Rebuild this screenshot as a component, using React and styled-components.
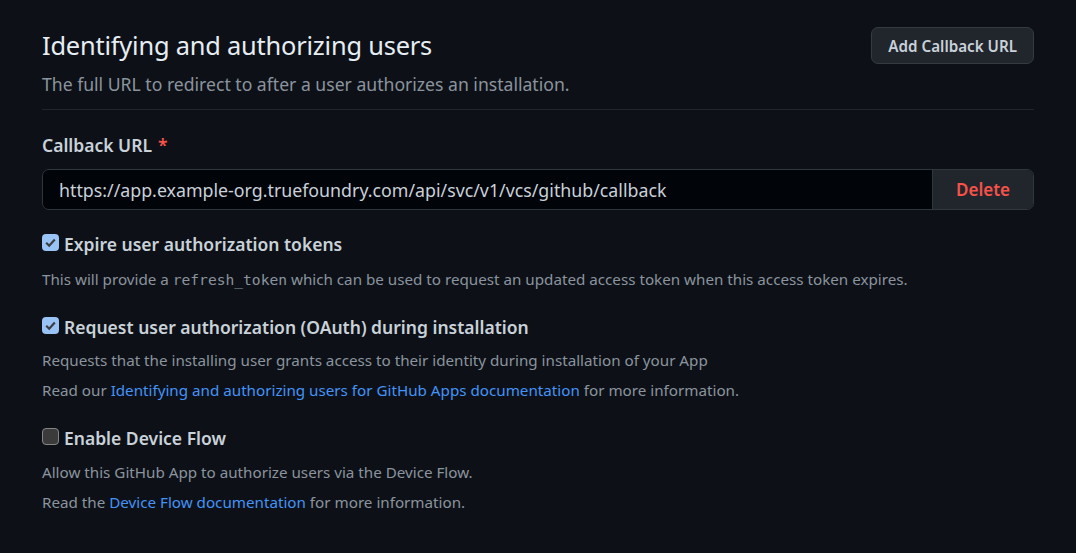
import React from 'react';
import styled, { createGlobalStyle } from 'styled-components';

const GlobalStyle = createGlobalStyle`
  html, body {
    margin: 0;
    padding: 0;
    background: #0d1117;
  }
  body {
    font-family: "Noto Sans", "Open Sans", sans-serif;
    color: #c9d1d9;
  }
`;

const Page = styled.main`
  width: 992px;
  padding: 27px 42px 40px 42px;
`;

const Header = styled.div`
  display: flex;
  align-items: center;
  justify-content: space-between;
  height: 37px;
`;

const Title = styled.h2`
  margin: 0;
  font-size: 25.4px;
  font-weight: 400;
  line-height: 37px;
  color: #e6edf3;
  letter-spacing: -0.2px;
`;

const Button = styled.button`
  height: 37px;
  padding: 0 16px;
  background: #21262d;
  border: 1px solid #363b42;
  border-radius: 7px;
  color: #c9d1d9;
  font-family: inherit;
  font-size: 15.2px;
  font-weight: 600;
`;

const Subtitle = styled.p`
  margin: 8px 0 0 0;
  padding-bottom: 13px;
  border-bottom: 1px solid #21262d;
  font-size: 17.6px;
  line-height: 24px;
  color: #8b949e;
`;

const Label = styled.div`
  margin-top: 23px;
  font-size: 17.5px;
  font-weight: 600;
  line-height: 24px;
  color: #c9d1d9;
`;

const Required = styled.span`
  color: #f85149;
  margin-left: 6px;
`;

const InputGroup = styled.div`
  display: flex;
  margin-top: 12px;
  height: 41px;
  box-sizing: border-box;
  border: 1px solid #30363d;
  border-radius: 7px;
  overflow: hidden;
`;

const UrlInput = styled.div`
  flex: 1;
  display: flex;
  align-items: center;
  padding: 0 16px;
  background: #010409;
  font-size: 17.8px;
  color: #c9d1d9;
`;

const DeleteButton = styled.div`
  width: 100px;
  display: flex;
  align-items: center;
  justify-content: center;
  background: #21262d;
  border-left: 1px solid #30363d;
  color: #f85149;
  font-size: 17px;
  font-weight: 600;
`;

const Option = styled.div`
  margin-top: ${p => p.$top}px;
`;

const CheckRow = styled.label`
  display: flex;
  align-items: center;
  gap: 5px;
  font-size: 17.5px;
  font-weight: 600;
  line-height: 24px;
  color: #c9d1d9;
`;

const Box = styled.span`
  width: 17px;
  height: 17px;
  margin-top: -3px;
  border-radius: 4px;
  box-sizing: border-box;
  display: flex;
  align-items: center;
  justify-content: center;
  background: ${p => (p.$checked ? '#99c3f5' : '#3b3b3b')};
  border: ${p => (p.$checked ? '0' : '1.5px solid #858585')};
`;

const Note = styled.p`
  margin: ${p => p.$top}px 0 0 0;
  font-size: 15.2px;
  line-height: 22px;
  color: #8b949e;
`;

const Code = styled.code`
  font-family: "DejaVu Sans Mono", "Liberation Mono", monospace;
  font-size: 14.6px;
`;

const Link = styled.a`
  color: #4493f8;
  text-decoration: none;
`;

function Checkbox({ checked, children }) {
  return (
    <CheckRow>
      <Box $checked={checked}>
        {checked && (
          <svg width="13" height="13" viewBox="0 0 13 13">
            <path d="M2.2 6.8 L5.2 9.7 L10.8 3.4" fill="none" stroke="#3a3d42" strokeWidth="2.2" />
          </svg>
        )}
      </Box>
      {children}
    </CheckRow>
  );
}

export default function App() {
  return (
    <Page>
      <GlobalStyle />
      <Header>
        <Title>Identifying and authorizing users</Title>
        <Button>Add Callback URL</Button>
      </Header>
      <Subtitle>The full URL to redirect to after a user authorizes an installation.</Subtitle>

      <Label>
        Callback URL<Required>*</Required>
      </Label>
      <InputGroup>
        <UrlInput>https://app.example-org.truefoundry.com/api/svc/v1/vcs/github/callback</UrlInput>
        <DeleteButton>Delete</DeleteButton>
      </InputGroup>

      <Option $top={22}>
        <Checkbox checked>Expire user authorization tokens</Checkbox>
        <Note $top={12}>
          This will provide a <Code>refresh_token</Code> which can be used to request an updated access token when this access token expires.
        </Note>
      </Option>

      <Option $top={24}>
        <Checkbox checked>Request user authorization (OAuth) during installation</Checkbox>
        <Note $top={10}>
          Requests that the installing user grants access to their identity during installation of your App
        </Note>
        <Note $top={8}>
          Read our <Link href="#">Identifying and authorizing users for GitHub Apps documentation</Link> for more information.
        </Note>
      </Option>

      <Option $top={25}>
        <Checkbox>Enable Device Flow</Checkbox>
        <Note $top={11}>Allow this GitHub App to authorize users via the Device Flow.</Note>
        <Note $top={8}>
          Read the <Link href="#">Device Flow documentation</Link> for more information.
        </Note>
      </Option>
    </Page>
  );
}
